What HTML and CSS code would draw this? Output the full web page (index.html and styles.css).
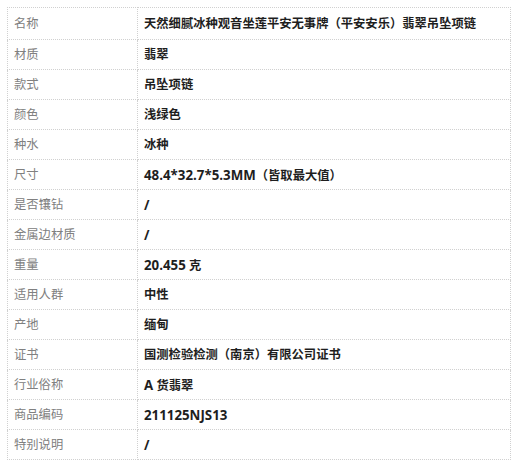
FILE: index.html
```html
<!DOCTYPE html>
<html lang="zh">
<head>
<meta charset="utf-8">
<link rel="stylesheet" href="styles.css">
</head>
<body>
<table class="spec">
  <tr class="first"><td class="k">名称</td><td class="v">天然细腻冰种观音坐莲平安无事牌（平安安乐）翡翠吊坠项链</td></tr>
  <tr><td class="k">材质</td><td class="v">翡翠</td></tr>
  <tr><td class="k">款式</td><td class="v">吊坠项链</td></tr>
  <tr><td class="k">颜色</td><td class="v">浅绿色</td></tr>
  <tr><td class="k">种水</td><td class="v">冰种</td></tr>
  <tr><td class="k">尺寸</td><td class="v"><span class="lat">48.4*32.7*5.3MM</span>（皆取最大值）</td></tr>
  <tr><td class="k">是否镶钻</td><td class="v"><span class="lat">/</span></td></tr>
  <tr><td class="k">金属边材质</td><td class="v"><span class="lat">/</span></td></tr>
  <tr><td class="k">重量</td><td class="v"><span class="lat">20.455</span> 克</td></tr>
  <tr><td class="k">适用人群</td><td class="v">中性</td></tr>
  <tr><td class="k">产地</td><td class="v">缅甸</td></tr>
  <tr><td class="k">证书</td><td class="v">国测检验检测（南京）有限公司证书</td></tr>
  <tr><td class="k">行业俗称</td><td class="v"><span class="lat">A</span> 货翡翠</td></tr>
  <tr><td class="k">商品编码</td><td class="v"><span class="lat">211125NJS13</span></td></tr>
  <tr><td class="k">特别说明</td><td class="v"><span class="lat">/</span></td></tr>
</table>
</body>
</html>
```
FILE: styles.css
```css
html, body {
  margin: 0;
  padding: 0;
  background: #ffffff;
}
body {
  padding: 7px 0 0 7px;
  font-family: "Open Sans", "Noto Sans CJK SC", sans-serif;
  font-size: 12.3px;
}
.spec {
  border-collapse: collapse;
  width: 504px;
  table-layout: fixed;
}
.spec td {
  border: 1px dotted #d0d0d0;
  height: 28px;
  padding: 1px 6px 0;
  vertical-align: middle;
  line-height: 16px;
}
.spec tr.first td {
  height: 30px;
}
.spec td.k {
  width: 117px;
  color: #808080;
  font-weight: 400;
}
.spec td.v {
  color: #1e1e1e;
  font-weight: 700;
}
.lat {
  font-size: 13.3px;
}
```
